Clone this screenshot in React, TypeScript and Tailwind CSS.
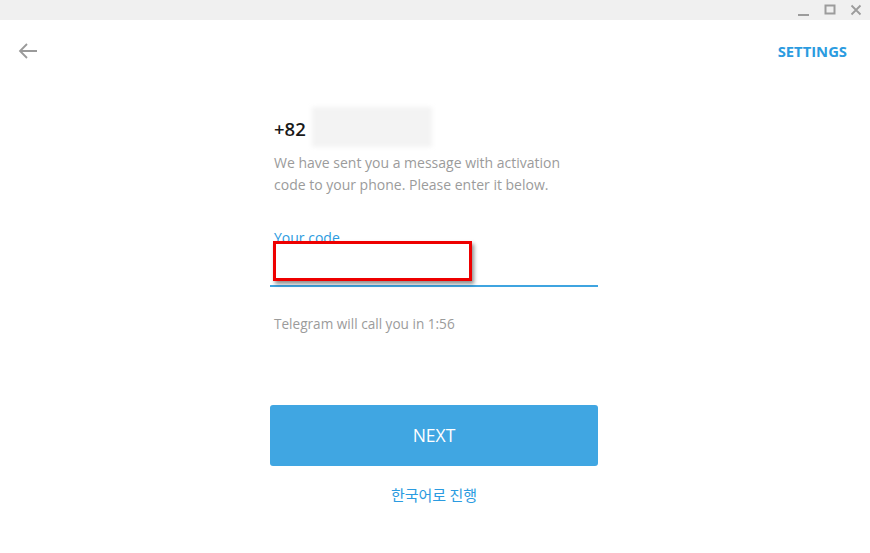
import React from "react";

export default function App() {
  return (
    <div className="w-[870px] h-[553px] bg-white overflow-hidden relative" style={{ fontFamily: '"Open Sans", sans-serif' }}>
      {/* title bar */}
      <div className="h-[20px] bg-[#f0f0f0] flex items-center justify-end pr-[8px] gap-[14px]">
        <svg width="13" height="12" viewBox="0 0 13 12" className="mt-[1px]">
          <rect x="1" y="9" width="11" height="2" fill="#9c9c9c" />
        </svg>
        <svg width="12" height="12" viewBox="0 0 12 12">
          <rect x="1.5" y="1.5" width="9" height="8" fill="none" stroke="#9c9c9c" strokeWidth="2" />
        </svg>
        <svg width="12" height="12" viewBox="0 0 12 12">
          <path d="M1.5 1.5 L10.5 10.5 M10.5 1.5 L1.5 10.5" stroke="#9c9c9c" strokeWidth="1.8" />
        </svg>
      </div>
      {/* header row */}
      <div className="flex items-center justify-between h-[62px] pl-[18px] pr-[23px]">
        <svg width="20" height="16" viewBox="0 0 20 16">
          <path d="M19 8 H2 M9 1 L2 8 L9 15" fill="none" stroke="#9a9a9a" strokeWidth="1.8" />
        </svg>
        <span className="text-[14.8px] font-bold text-[#2b9be0]">SETTINGS</span>
      </div>
      {/* content */}
      <div className="ml-[270px] w-[328px] mt-[25px]">
        <div className="flex items-center h-[40px]">
          <span className="pl-[4px] pt-[3px] text-[18.5px] font-semibold text-[#1a1a1a]">+82</span>
          <div className="ml-[6px] w-[120px] h-[40px] bg-[#f3f3f3] blur-[2px]" />
        </div>
        <p className="pl-[4px] mt-[5px] text-[14px] leading-[22px] text-[#9b9b9b] whitespace-nowrap">
          We have sent you a message with activation
          <br />
          code to your phone. Please enter it below.
        </p>
        <div className="relative mt-[33px] h-[64px]">
          <div className="pl-[4px] text-[14px] leading-[18px] text-[#2b9be0]">Your code</div>
          <div className="absolute left-0 right-0 top-[56px] h-[2px] bg-[#3fa4e0]" />
          <div className="absolute left-[3px] top-[12px] w-[199px] h-[40px] border-[3px] border-[#ee0000] shadow-[2px_3px_4px_rgba(0,0,0,0.45)]" />
        </div>
        <div className="pl-[4px] mt-[21px] text-[13.6px] leading-[20px] text-[#9b9b9b]">Telegram will call you in 1:56</div>
        <button className="mt-[71px] w-[328px] h-[61px] rounded-[3px] bg-[#40a6e2] text-white text-[17.5px] flex items-center justify-center">
          NEXT
        </button>
        <div className="mt-[18px] text-center text-[15px] text-[#2b9be0]" style={{ fontFamily: '"Noto Sans CJK KR", "Open Sans", sans-serif' }}>
          한국어로 진행
        </div>
      </div>
    </div>
  );
}
